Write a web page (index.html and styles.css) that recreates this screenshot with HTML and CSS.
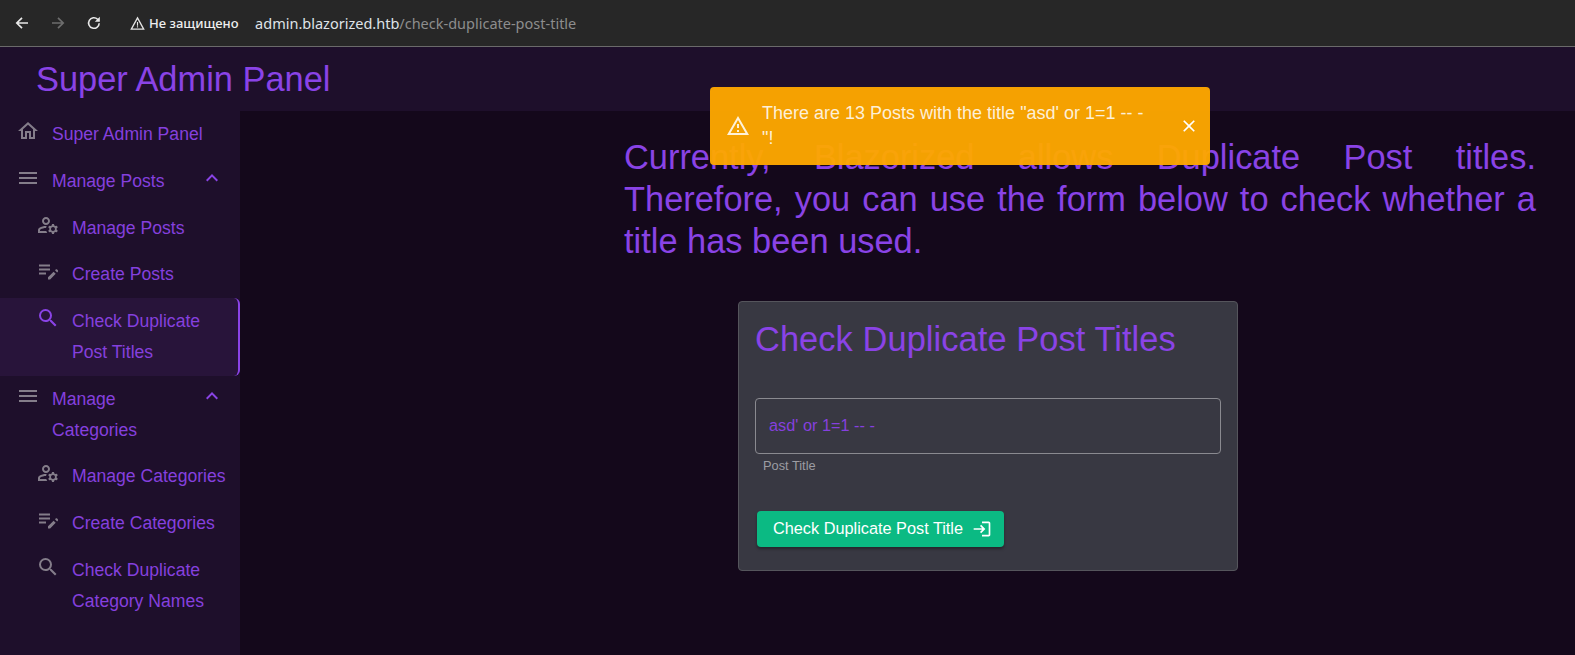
FILE: index.html
```html
<!DOCTYPE html>
<html lang="ru">
<head>
<meta charset="utf-8">
<title>Check Duplicate Post Titles</title>
<link rel="stylesheet" href="styles.css">
</head>
<body>
<div class="browser">
  <svg class="nav-ic first" viewBox="0 0 16 16"><path d="M14 8H3M8 2.8 2.8 8 8 13.2" fill="none" stroke="#e8e8e8" stroke-width="1.7"/></svg>
  <svg class="nav-ic" viewBox="0 0 16 16"><path d="M2 8h11M8 2.8 13.2 8 8 13.2" fill="none" stroke="#6d6d6d" stroke-width="1.7"/></svg>
  <svg class="nav-ic" viewBox="0 0 16 16"><path d="M13.2 8.2A5.3 5.3 0 1 1 11.6 4.2L13 5.6" fill="none" stroke="#e8e8e8" stroke-width="1.6"/><path d="M13.8 1.8v5h-5z" fill="#e8e8e8"/></svg>
  <svg class="warn-ic" viewBox="0 0 16 16"><path d="M8 2 14.6 14H1.4Z" fill="none" stroke="#e4e4e4" stroke-width="1.4"/><path d="M7.4 6.5h1.2v3.8H7.4zM7.4 11h1.2v1.2H7.4z" fill="#e4e4e4"/></svg>
  <span class="insecure">Не защищено</span>
  <span class="url">admin.blazorized.htb<span class="url-path">/check-duplicate-post-title</span></span>
</div>
<header class="appbar"><h1 class="brand">Super Admin Panel</h1></header>
<div class="body">
  <nav class="sidebar">
    <a class="item"><svg class="ic" viewBox="0 0 24 24"><path d="M12 5.69l5 4.5V18h-2v-6H9v6H7v-7.81l5-4.5M12 3 2 12h3v8h6v-6h2v6h6v-8h3L12 3z"/></svg><span class="label">Super Admin Panel</span></a>
    <a class="item group"><svg class="ic" viewBox="0 0 24 24"><path d="M3 18h18v-2H3v2zm0-5h18v-2H3v2zm0-7v2h18V6H3z"/></svg><span class="label">Manage Posts</span><svg class="chev" viewBox="0 0 24 24"><path d="M7.41 15.41 12 10.83l4.59 4.58L18 14l-6-6-6 6z"/></svg></a>
    <a class="item sub"><svg class="ic" viewBox="0 0 24 24"><path d="M4 18v-.65c0-.34.16-.66.41-.81C6.1 15.53 8.03 15 10 15c.03 0 .05 0 .08.01.1-.7.3-1.37.59-1.98-.22-.02-.44-.03-.67-.03-2.42 0-4.68.67-6.61 1.82-.88.52-1.39 1.5-1.39 2.53V20h9.26c-.42-.6-.75-1.28-.97-2H4zM10 12c2.21 0 4-1.79 4-4s-1.79-4-4-4-4 1.79-4 4 1.79 4 4 4zm0-6c1.1 0 2 .9 2 2s-.9 2-2 2-2-.9-2-2 .9-2 2-2zM20.75 16c0-.22-.03-.42-.06-.63l1.14-1.01-1-1.73-1.45.49c-.32-.27-.68-.48-1.08-.63L18 11h-2l-.3 1.49c-.4.15-.76.36-1.08.63l-1.45-.49-1 1.73 1.14 1.01c-.03.21-.06.41-.06.63s.03.42.06.63l-1.14 1.01 1 1.73 1.45-.49c.32.27.68.48 1.08.63L16 21h2l.3-1.49c.4-.15.76-.36 1.08-.63l1.45.49 1-1.73-1.14-1.01c.03-.21.06-.41.06-.63zM17 18c-1.1 0-2-.9-2-2s.9-2 2-2 2 .9 2 2-.9 2-2 2z"/></svg><span class="label">Manage Posts</span></a>
    <a class="item sub"><svg class="ic" viewBox="0 0 24 24"><path d="M3 9.6h11v2H3zM3 5.6h11v2H3zM3 13.6h7v2H3z"/><path transform="translate(1 -1.6)" d="M18.01 12.87l.71-.71c.39-.39 1.02-.39 1.41 0l.71.71c.39.39.39 1.02 0 1.41l-.71.71-2.12-2.12zm-1.41 1.41L11 19.88V22h2.12l5.6-5.6-2.12-2.12z"/></svg><span class="label">Create Posts</span></a>
    <a class="item sub active"><svg class="ic" viewBox="0 0 24 24"><path d="M15.5 14h-.79l-.28-.27A6.471 6.471 0 0 0 16 9.5 6.5 6.5 0 1 0 9.5 16c1.61 0 3.09-.59 4.23-1.57l.27.28v.79l5 4.99L20.49 19l-4.99-5zm-6 0C7.01 14 5 11.99 5 9.5S7.01 5 9.5 5 14 7.01 14 9.5 11.99 14 9.5 14z"/></svg><span class="label">Check Duplicate Post Titles</span></a>
    <a class="item group"><svg class="ic" viewBox="0 0 24 24"><path d="M3 18h18v-2H3v2zm0-5h18v-2H3v2zm0-7v2h18V6H3z"/></svg><span class="label">Manage Categories</span><svg class="chev" viewBox="0 0 24 24"><path d="M7.41 15.41 12 10.83l4.59 4.58L18 14l-6-6-6 6z"/></svg></a>
    <a class="item sub"><svg class="ic" viewBox="0 0 24 24"><path d="M4 18v-.65c0-.34.16-.66.41-.81C6.1 15.53 8.03 15 10 15c.03 0 .05 0 .08.01.1-.7.3-1.37.59-1.98-.22-.02-.44-.03-.67-.03-2.42 0-4.68.67-6.61 1.82-.88.52-1.39 1.5-1.39 2.53V20h9.26c-.42-.6-.75-1.28-.97-2H4zM10 12c2.21 0 4-1.79 4-4s-1.79-4-4-4-4 1.79-4 4 1.79 4 4 4zm0-6c1.1 0 2 .9 2 2s-.9 2-2 2-2-.9-2-2 .9-2 2-2zM20.75 16c0-.22-.03-.42-.06-.63l1.14-1.01-1-1.73-1.45.49c-.32-.27-.68-.48-1.08-.63L18 11h-2l-.3 1.49c-.4.15-.76.36-1.08.63l-1.45-.49-1 1.73 1.14 1.01c-.03.21-.06.41-.06.63s.03.42.06.63l-1.14 1.01 1 1.73 1.45-.49c.32.27.68.48 1.08.63L16 21h2l.3-1.49c.4-.15.76-.36 1.08-.63l1.45.49 1-1.73-1.14-1.01c.03-.21.06-.41.06-.63zM17 18c-1.1 0-2-.9-2-2s.9-2 2-2 2 .9 2 2-.9 2-2 2z"/></svg><span class="label">Manage Categories</span></a>
    <a class="item sub"><svg class="ic" viewBox="0 0 24 24"><path d="M3 9.6h11v2H3zM3 5.6h11v2H3zM3 13.6h7v2H3z"/><path transform="translate(1 -1.6)" d="M18.01 12.87l.71-.71c.39-.39 1.02-.39 1.41 0l.71.71c.39.39.39 1.02 0 1.41l-.71.71-2.12-2.12zm-1.41 1.41L11 19.88V22h2.12l5.6-5.6-2.12-2.12z"/></svg><span class="label">Create Categories</span></a>
    <a class="item sub"><svg class="ic" viewBox="0 0 24 24"><path d="M15.5 14h-.79l-.28-.27A6.471 6.471 0 0 0 16 9.5 6.5 6.5 0 1 0 9.5 16c1.61 0 3.09-.59 4.23-1.57l.27.28v.79l5 4.99L20.49 19l-4.99-5zm-6 0C7.01 14 5 11.99 5 9.5S7.01 5 9.5 5 14 7.01 14 9.5 11.99 14 9.5 14z"/></svg><span class="label">Check Duplicate Category Names</span></a>
  </nav>
  <main class="main">
    <p class="intro"><span class="intro-first">Currently, Blazorized allows Duplicate Post titles.</span> Therefore, you can use the form below to check whether a title has been used.</p>
    <section class="card">
      <h2 class="card-title">Check Duplicate Post Titles</h2>
      <div class="field"><span class="field-value">asd' or 1=1 -- -</span></div>
      <div class="helper">Post Title</div>
      <button class="btn" type="button">Check Duplicate Post Title<svg class="btn-ic" viewBox="0 0 24 24"><path d="M11 7 9.6 8.4l2.6 2.6H2v2h10.2l-2.6 2.6L11 17l5-5-5-5zm9 12h-8v2h8c1.1 0 2-.9 2-2V5c0-1.1-.9-2-2-2h-8v2h8v14z"/></svg></button>
    </section>
  </main>
</div>
<div class="toast">
  <svg class="toast-ic" viewBox="0 0 24 24"><path d="M12 5.99 19.53 19H4.47L12 5.99M12 2 1 21h22L12 2zm1 14h-2v2h2v-2zm0-6h-2v4h2v-4z"/></svg>
  <div class="toast-msg">There are 13 Posts with the title "asd' or 1=1 -- -<br>"!</div>
  <svg class="toast-x" viewBox="0 0 24 24"><path d="M19 6.41 17.59 5 12 10.59 6.41 5 5 6.41 10.59 12 5 17.59 6.41 19 12 13.41 17.59 19 19 17.59 13.41 12z"/></svg>
</div>
</body>
</html>
```
FILE: styles.css
```css
* { box-sizing: border-box; }
html, body { margin: 0; height: 100%; }
body {
  width: 1575px; height: 655px; overflow: hidden;
  background: #14081b; color: #8a43e6;
  font-family: "Liberation Sans", Arial, sans-serif;
  display: flex; flex-direction: column; position: relative;
}
.browser {
  height: 47px; flex: none; display: flex; align-items: center;
  background: #272727; border-bottom: 1px solid #6a6a6a;
  color: #e8e8e8;
}
.nav-ic { width: 16px; height: 16px; margin-right: 20px; }
.nav-ic.first { margin-left: 14px; }
.warn-ic { width: 15px; height: 15px; margin-left: 8px; margin-right: 4px; }
.insecure { font: 500 13px "Noto Sans", sans-serif; color: #eee; margin-right: 16.5px; }
.url { font: 14.5px "Noto Sans", sans-serif; color: #dfe3e8; }
.url-path { color: #8d8d8d; }
.appbar {
  height: 64px; flex: none; display: flex; align-items: center;
  padding-left: 36px; background: #1e0f2b;
}
.brand { margin: 0; font-size: 34.4px; font-weight: 400; color: #8a43e6; }
.body { flex: 1; display: flex; min-height: 0; }
.sidebar { width: 240px; flex: none; background: #1e0f2b; }
.item {
  display: flex; align-items: flex-start; padding: 8px 16px;
  font-size: 17.6px; line-height: 30.8px; color: #8540de;
}
.ic { width: 24px; height: 24px; fill: #847d8a; flex: none; margin-right: 12px; }
.item.sub { padding: 8px 8px 8px 36px; }
.item.group .label { flex: 1; }
.chev { width: 24px; height: 24px; fill: #8a43e6; flex: none; }
.item.active {
  background: #28143a; border-right: 2px solid #8a43e6; border-radius: 0 6px 6px 0;
}
.item.active .ic { fill: #8a43e6; }
.main { flex: 1; padding: 26px 39px 0 384px; display: flex; flex-direction: column; }
.intro { margin: 0; font-size: 34.4px; line-height: 41.8px; text-align: justify; }
.intro-first { display: block; text-align-last: justify; }
.card {
  width: 500px; height: 270px; margin: 39px 0 0 114px;
  background: #383842; border: 1px solid #55555c; border-radius: 4px; padding: 16px;
}
.card-title { margin: 0; font-size: 34.4px; font-weight: 400; line-height: 42px; letter-spacing: .08px; }
.field {
  height: 56px; margin-top: 38px; border: 1px solid #8a8a90; border-radius: 4px;
  padding: 0 13px 2px; display: flex; align-items: center;
  font-size: 16.3px; color: #8540de;
}
.helper { font-size: 12.8px; line-height: 15px; color: #9c9ca2; padding: 4px 8px 1px; }
.btn {
  margin: 37px 0 0 2px; height: 36px; padding: 0 12px 1px 16px; border: 0; border-radius: 4px;
  background: #0bba83; color: #fff; font: 16.3px "Liberation Sans", sans-serif;
  display: flex; align-items: center; gap: 9px; box-shadow: 0 2px 3px rgba(0,0,0,.35);
}
.btn-ic { width: 20px; height: 20px; fill: #fff; }
.toast {
  position: absolute; left: 710px; top: 87px; width: 500px; height: 78px;
  background: rgba(254,168,0,.96); border-radius: 4px; color: rgba(255,255,255,.85); display: flex; align-items: center;
  padding: 0 11px 0 16px; font-size: 18px; line-height: 24.6px;
}
.toast-ic { width: 24px; height: 24px; fill: rgba(255,255,255,.85); flex: none; margin-right: 12px; }
.toast-msg { flex: 1; }
.toast-x { width: 20px; height: 20px; fill: #fff; flex: none; margin-left: 12px; }
```
